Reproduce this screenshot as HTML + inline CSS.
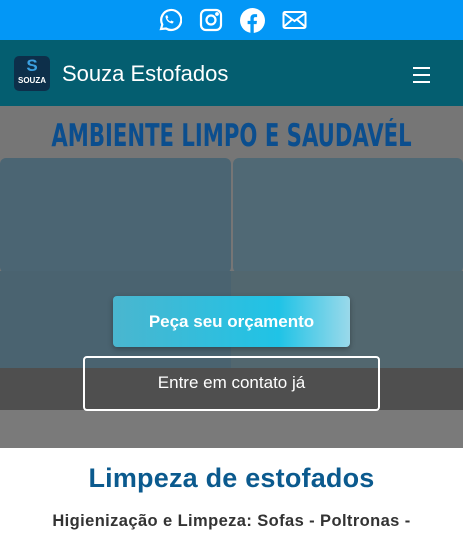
<!DOCTYPE html>
<html><head><meta charset="utf-8"><style>
*{margin:0;padding:0;box-sizing:border-box}
body{width:463px;height:539px;overflow:hidden;font-family:"Liberation Sans",sans-serif;background:#fff;position:relative}
.top{height:40px;background:#0397f6;display:flex;justify-content:center;align-items:center;gap:17px}
.nav{height:66px;background:#045e70;position:relative}
.logo{position:absolute;left:14px;top:16px;width:36px;height:35px;background:#0d2f4a;border-radius:5px;color:#fff;font-weight:bold;text-align:center}
.brand{position:absolute;left:62px;top:21px;color:#fff;font-size:22px}
.burger{position:absolute;right:33px;top:27px;width:17px}
.burger i{display:block;height:2px;background:#fff;margin-bottom:5px}
.hero{position:absolute;top:106px;left:0;width:463px;height:342px;background:#767676;overflow:hidden}
.title{position:absolute;top:12px;left:-100px;width:663px;text-align:center;color:#0b4e8e;font-family:"DejaVu Sans Condensed","Liberation Sans Narrow",sans-serif;font-weight:bold;font-size:31px;transform:scaleX(.76)}
.s{position:absolute;background:#506975}
.btn1{position:absolute;left:113px;top:190px;width:237px;height:51px;border-radius:4px;background:linear-gradient(90deg,#4ab6cf,#20c3e6 70%,#9ad9ea);color:#fff;font-weight:bold;font-size:17px;text-align:center;line-height:51px;box-shadow:0 2px 6px rgba(0,0,0,.3)}
.btn2{position:absolute;left:83px;top:250px;width:297px;height:55px;border:2px solid #fff;border-radius:4px;color:#fff;font-size:17px;text-align:center;line-height:50px}
h1{position:absolute;top:463px;width:100%;text-align:center;color:#0b5a8e;font-size:27px;font-weight:bold;letter-spacing:.2px}
p{position:absolute;top:512px;width:100%;text-align:center;color:#333;font-size:16.5px;font-weight:bold;letter-spacing:.4px}
</style></head><body>
<div class="top">
<svg width="26" height="26" viewBox="0 0 26 26" fill="none" stroke="#fff" stroke-width="2.2"><path d="M5 22l1.3-4.5A10 10 0 1 1 10 21.5z"/><path d="M9.5 9c0 4 3 7 7 7.5l1.3-1.8-2.5-1.2-1 1c-1.3-.6-2.4-1.7-3-3l1-1-1.2-2.5z" fill="#fff" stroke="none"/></svg>
<svg width="24" height="24" viewBox="0 0 24 24" fill="none" stroke="#fff" stroke-width="2.2"><rect x="2" y="2" width="20" height="20" rx="5"/><circle cx="12" cy="12" r="4.5"/><circle cx="18" cy="6" r=".8" fill="#fff"/></svg>
<svg width="25" height="25" viewBox="0 0 24 24"><circle cx="12" cy="12" r="12" fill="#fff"/><path d="M13.2 24v-8.5h2.7l.4-3.2h-3.1v-2c0-.9.3-1.5 1.6-1.5h1.6V6a21 21 0 0 0-2.4-.1c-2.4 0-4 1.4-4 4.1v2.3H7.3v3.2H10V24z" fill="#0397f6"/></svg>
<svg width="25" height="20" viewBox="0 0 25 20" fill="none" stroke="#fff" stroke-width="2"><rect x="1.5" y="2" width="22" height="16" rx="1.5"/><path d="M1.5 3l11 8 11-8M1.5 17l8-7M23.5 17l-8-7"/></svg>
</div>
<div class="nav"><div class="logo"><div style="color:#3ba0e0;font-size:17px;line-height:20px">S</div><div style="font-size:8px">SOUZA</div></div><div class="brand">Souza Estofados</div><div class="burger"><i></i><i></i><i></i></div></div>
<div class="hero">
<div class="title">AMBIENTE LIMPO E SAUDAVÉL</div>
<div class="s" style="left:0;top:52px;width:231px;height:115px;background:#4b6573;border-radius:6px"></div>
<div class="s" style="left:233px;top:52px;width:230px;height:115px;border-radius:6px"></div>
<div class="s" style="left:0;top:165px;width:463px;height:97px;background:#52676f"></div>
<div class="s" style="left:0;top:165px;width:231px;height:97px;background:#4a6370"></div>
<div class="s" style="left:0;top:262px;width:463px;height:42px;background:#4f4f4f"></div>
<div class="s" style="left:0;top:304px;width:463px;height:38px;background:#7a7a7a"></div>
<div class="btn1">Peça seu orçamento</div>
<div class="btn2">Entre em contato já</div>
</div>
<h1>Limpeza de estofados</h1>
<p>Higienização e Limpeza: Sofas - Poltronas -</p>
</body></html>
